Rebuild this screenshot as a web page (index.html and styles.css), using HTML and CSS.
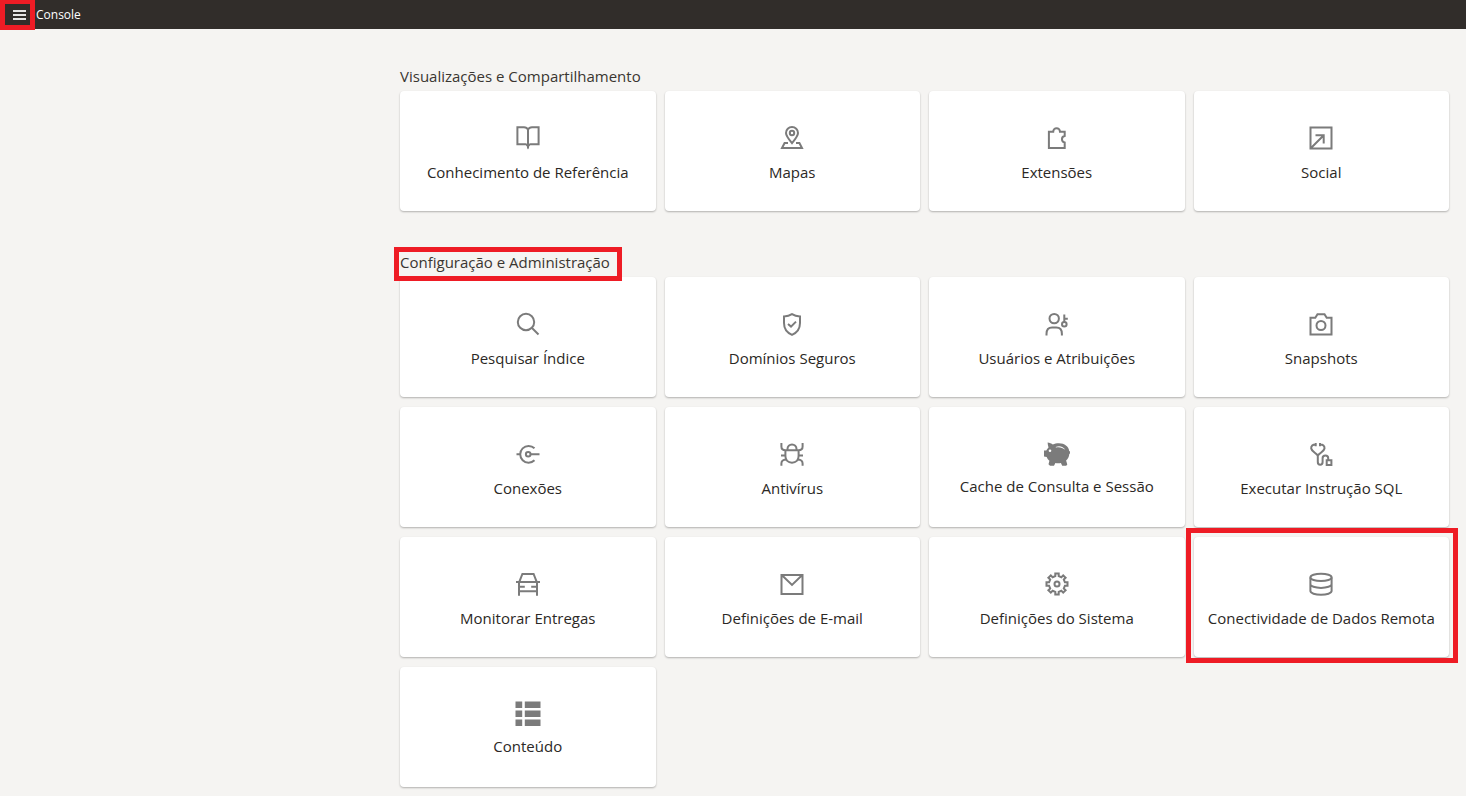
FILE: index.html
```html
<!DOCTYPE html>
<html lang="pt-BR">
<head>
<meta charset="utf-8">
<meta name="viewport" content="width=device-width, initial-scale=1">
<title>Console</title>
<link rel="stylesheet" href="styles.css">
</head>
<body>
<header class="topbar">
  <button class="menu-button marked" type="button" aria-label="Menu">
    <svg class="menu-icon" viewBox="0 0 13 10" aria-hidden="true"><path d="M0 1h13M0 5h13M0 9h13"/></svg>
  </button>
  <h1 class="topbar-title">Console</h1>
</header>
<main class="console">
  <section class="group">
    <h2 class="group-title"><span class="group-name">Visualizações e Compartilhamento</span></h2>
    <div class="cards">
      <a class="card" href="#">
        <svg class="icon" viewBox="0 0 24 24" aria-hidden="true"><path d="M12 3.600C11.200 1.900 9.800 1.200 8 1.200H1.400v17H9.600c1.400 0 2.100.7 2.400 1.800.3-1.100 1-1.800 2.400-1.800h8.200v-17H16c-1.800 0-3.200.7-4 2.400V22.500"/><path class="solid" d="M10 19h4l-2 3.500z"/></svg>
        <span class="label">Conhecimento de Referência</span>
      </a>
      <a class="card" href="#">
        <svg class="icon" viewBox="0 0 24 24" aria-hidden="true"><path d="M12 17.200C8.500 13 6 10 6 7a6 6 0 0 1 12 0c0 3-2.500 6-6 10.200z"/><circle cx="12" cy="7" r="2.200"/><path d="M8 17H4.600L2 22.100h20L19.400 17H16"/></svg>
        <span class="label">Mapas</span>
      </a>
      <a class="card" href="#">
        <svg class="icon" viewBox="0 0 24 24" aria-hidden="true"><path d="M3.900 5.700H8.200a3.400 3.400 0 0 1 6.800 0H19.700V10a3.300 3.300 0 0 0 0 6.500V22.100H3.900z"/></svg>
        <span class="label">Extensões</span>
      </a>
      <a class="card" href="#">
        <svg class="icon" viewBox="0 0 24 24" aria-hidden="true"><path d="M1.500 1.500h21v21h-21zM2 22L14.500 9.500M6.500 9.300h8.200v8.200"/></svg>
        <span class="label">Social</span>
      </a>
    </div>
  </section>
  <section class="group">
    <h2 class="group-title"><span class="group-name marked">Configuração e Administração</span></h2>
    <div class="cards">
      <a class="card" href="#">
        <svg class="icon" viewBox="0 0 24 24" aria-hidden="true"><circle cx="10" cy="10" r="8.200"/><path d="M16 16l6.500 6.500"/></svg>
        <span class="label">Pesquisar Índice</span>
      </a>
      <a class="card" href="#">
        <svg class="icon" viewBox="0 0 24 24" aria-hidden="true"><path d="M12 2.200C9.500 3.800 7 4.400 4 4.500V11c0 6 3 9.700 8 11.800 5-2.100 8-5.800 8-11.800V4.500C17 4.400 14.500 3.800 12 2.200zM8 12l3 2.600 5-5"/></svg>
        <span class="label">Domínios Seguros</span>
      </a>
      <a class="card" href="#">
        <svg class="icon" viewBox="0 0 24 24" aria-hidden="true"><circle cx="9.200" cy="6.600" r="4.700"/><path d="M1.500 23.500v-1.600c0-4.400 2.600-6.400 5.600-6.400h4.200c3 0 5.600 2 5.600 6.400v1.600"/><circle cx="19.300" cy="12.300" r="2.300"/><path d="M19.300 10V2.500M19.300 6.700h3.500"/></svg>
        <span class="label">Usuários e Atribuições</span>
      </a>
      <a class="card" href="#">
        <svg class="icon" viewBox="0 0 24 24" aria-hidden="true"><path d="M1.500 5.800H6.300L8.500 2.200h7l2.200 3.600h4.800V22.600h-21z"/><circle cx="12" cy="13.500" r="4.500"/></svg>
        <span class="label">Snapshots</span>
      </a>
      <a class="card" href="#">
        <svg class="icon" viewBox="0 0 24 24" aria-hidden="true"><path d="M18.500 6.300a8.400 8.400 0 1 0 0 12M.500 12.300h3.300M14.500 12.300h9"/><circle cx="12.200" cy="12.300" r="2.300"/></svg>
        <span class="label">Conexões</span>
      </a>
      <a class="card" href="#">
        <svg class="icon" viewBox="0 0 24 24" aria-hidden="true"><path d="M5.200 8.300h13.600M7.500 8V7a4.500 4.500 0 0 1 9 0v1M5.400 8.300V14c0 4 2.600 6.700 6.600 6.700s6.600-2.700 6.600-6.700V8.300M1.400 1v3.500c0 2 1.400 3.800 4 3.800M22.600 1v3.500c0 2-1.400 3.800-4 3.800M1 13.600h4.400M18.600 13.600H23M1.400 23.700V21.500c0-2.200 1.500-3.800 4.700-4M22.600 23.700V21.500c0-2.200-1.500-3.800-4.700-4"/></svg>
        <span class="label">Antivírus</span>
      </a>
      <a class="card card-filled" href="#">
        <svg class="icon" viewBox="0 0 26 26" aria-hidden="true"><path class="solid" d="M3.600 1.500c2 .1 3.900.9 5.200 2.100C10.500 2.700 12.600 2.300 15 2.300c5.600 0 9.600 3.300 10.200 7.600.3.300.6.400.8.500v2.200c-.3.100-.5.200-.7.400-.2 2.800-1.400 4.900-3.200 6.500l1.200 3.900-1.100 1.400h-4l-1.300-2.700c-1.600.3-3.900.3-5.500 0l-1.400 2.700H6l-1.500-1.500.9-3.500c-1.100-.8-2-1.900-2.700-3.700L0 15.400V9.600h2.300c.5-1.300 1.200-2.300 2.200-3.200C4 4.700 3.600 3 3.600 1.500z"/><circle class="cutout" cx="6" cy="9.800" r="1.300"/><path class="cutout" d="M11.600 5.900c3.500-1.600 7.800-.7 9.600 2.900-2.800-2.200-5.800-3-9.200-2.200z"/></svg>
        <span class="label">Cache de Consulta e Sessão</span>
      </a>
      <a class="card" href="#">
        <svg class="icon" viewBox="0 0 24 24" aria-hidden="true"><path d="M6.700 .9v3.400M11 .9v3.400M6.700 2.500C3.700 2.300 1.900 4.200 2.200 6.500 2.600 9.300 6.500 10.800 8.800 13.500 11.100 10.800 15.100 9.300 15.500 6.500 15.800 4.200 14 2.300 11 2.500M8.800 13.500v6.400c0 3.700 4.800 3.700 4.800 0v-3.700c0-3.700 5.600-3.700 5.600 0V18M17.700 18.300h4.700v4.600h-4.700z"/></svg>
        <span class="label">Executar Instrução SQL</span>
      </a>
      <a class="card" href="#">
        <svg class="icon" viewBox="0 0 24 24" aria-hidden="true"><path d="M0 10.100h24M3.200 10.100L6.400 2h11.200l3.200 8.100M3 10.100v13.600M21 10.100v13.600M3 19.200h18M4 14.700h4.800M15.200 14.700H20"/></svg>
        <span class="label">Monitorar Entregas</span>
      </a>
      <a class="card" href="#">
        <svg class="icon" viewBox="0 0 24 24" aria-hidden="true"><path d="M1.500 3h21v19h-21zM2 3.300l10 9.600 10-9.600"/></svg>
        <span class="label">Definições de E-mail</span>
      </a>
      <a class="card" href="#">
        <svg class="icon" viewBox="0 0 24 24" aria-hidden="true"><path d="M10.300 4.100V1.500h3.400v2.600l2.700 1.100 1.800-1.800 2.400 2.400-1.800 1.800 1.100 2.700h2.600v3.400h-2.600l-1.100 2.700 1.800 1.800-2.400 2.400-1.800-1.800-2.700 1.100v2.600h-3.400v-2.600l-2.700-1.100-1.800 1.800-2.400-2.400 1.800-1.800-1.100-2.700H1.500v-3.400h2.600l1.100-2.700-1.800-1.800 2.400-2.400 1.800 1.800z"/><circle cx="12" cy="12" r="2.500"/></svg>
        <span class="label">Definições do Sistema</span>
      </a>
      <a class="card marked" href="#">
        <svg class="icon" viewBox="0 0 24 24" aria-hidden="true"><ellipse cx="12" cy="5.400" rx="10.600" ry="3.700"/><path d="M1.400 5.400v13.700c0 2 4.700 3.700 10.600 3.700s10.600-1.700 10.600-3.700V5.400M1.400 12.200c0 2 4.700 3.700 10.600 3.700s10.600-1.700 10.600-3.700"/></svg>
        <span class="label">Conectividade de Dados Remota</span>
      </a>
      <a class="card card-filled" href="#">
        <svg class="icon" viewBox="0 0 26 26" aria-hidden="true"><path class="solid" d="M.5 .5h6.700v6.500H.5zM9.800 .5h15.700v6.500H9.800zM.5 9.500h6.700V16H.5zM9.800 9.500h15.700V16H9.800zM.5 18.500h6.700V25H.5zM9.800 18.500h15.700V25H9.800z"/></svg>
        <span class="label">Conteúdo</span>
      </a>
    </div>
  </section>
</main>
</body>
</html>
```
FILE: styles.css
```css
* {
  box-sizing: border-box;
}

body {
  margin: 0;
  background: #f5f4f2;
  color: #3a3631;
  font-family: "Open Sans", "Noto Sans", sans-serif;
  font-size: 15px;
  line-height: 24px;
}

.topbar {
  display: flex;
  align-items: center;
  height: 29px;
  background: #312d2a;
  color: #fff;
}

.topbar-title {
  margin: 0;
  font-size: 12px;
  font-weight: 400;
  line-height: 16px;
}

.menu-button {
  display: flex;
  align-items: center;
  justify-content: flex-end;
  width: 36px;
  height: 29px;
  padding: 0 10px 0 0;
  border: 0;
  background: none;
  color: #e6e5e4;
}

.menu-icon {
  width: 13px;
  height: 10px;
  fill: none;
  stroke: currentColor;
  stroke-width: 2;
}

.console {
  padding: 35px 17px 8px 400px;
}

.group + .group {
  margin-top: 39px;
}

.group-title {
  margin: 0 0 3px;
  font-size: 15px;
  font-weight: 400;
}

.group-name {
  display: inline-block;
}

.cards {
  display: grid;
  grid-template-columns: repeat(4, minmax(0, 1fr));
  gap: 10px 9px;
}

.card {
  display: flex;
  flex-direction: column;
  align-items: center;
  gap: 10px;
  min-height: 120px;
  padding: 35px 8px 24px;
  border-radius: 4px;
  background: #fff;
  box-shadow: 0 1px 2px rgba(0, 0, 0, 0.28);
  color: #2b2825;
  text-align: center;
  text-decoration: none;
}

.card-filled {
  gap: 7px;
  padding-top: 34px;
}

.icon {
  flex: none;
  width: 24px;
  height: 24px;
  fill: none;
  stroke: #7b7b7b;
  stroke-width: 2;
}

.card-filled .icon {
  width: 26px;
  height: 26px;
}

.icon .solid {
  fill: #7b7b7b;
  stroke: none;
}

.icon .cutout {
  fill: #fff;
  stroke: none;
}

/* Red outline that calls out a control */
.marked {
  position: relative;
}

.marked::after {
  content: "";
  position: absolute;
  z-index: 1;
  inset: -9px -9px -6px -8px;
  border: 5px solid #ee1c25;
  pointer-events: none;
}

.menu-button.marked::after {
  inset: 0 1px -1px 0;
  border-top-width: 4px;
}

.group-name.marked::after {
  inset: -3px -12px -7px -6px;
}
```
